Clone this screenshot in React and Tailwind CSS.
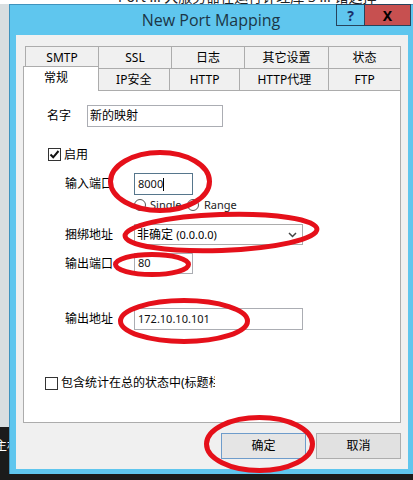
// New Port Mapping dialog (Windows 8 style) with red annotation circles
const FONT = "font-['Noto_Sans','Noto_Sans_CJK_SC',sans-serif]"

const TOP_TABS = [
  { label: 'SMTP', w: 'w-[74px]' },
  { label: 'SSL', w: 'w-[74px]' },
  { label: '日志', w: 'w-[74px]' },
  { label: '其它设置', w: 'w-[85px]' },
  { label: '状态', w: 'w-[73px]' },
]

const BOTTOM_TABS = [
  { label: 'IP安全', w: 'w-[72px]' },
  { label: 'HTTP', w: 'w-[72px]' },
  { label: 'HTTP代理', w: 'w-[90px]' },
  { label: 'FTP', w: 'w-[73px]' },
]

function Checkbox({ checked }) {
  return (
    <span className="w-[13px] h-[13px] border border-[#333] bg-white flex items-center justify-center shrink-0">
      {checked && (
        <svg width="11" height="11" viewBox="0 0 11 11">
          <path d="M1.5 5.5 L4.2 8.3 L9.5 2" fill="none" stroke="#111" strokeWidth="2" />
        </svg>
      )}
    </span>
  )
}

function Radio() {
  return <span className="w-[12px] h-[12px] rounded-full border border-[#555] bg-white shrink-0" />
}

function Field({ label, children, className = '' }) {
  return (
    <div className={`flex items-center pl-[41px] ${className}`}>
      <span className="w-[69px] text-[12px] text-black">{label}</span>
      {children}
    </div>
  )
}

function Annotations() {
  // hand-drawn red ellipses lying over the dialog
  return (
    <svg className="absolute inset-0 pointer-events-none" width="413" height="480" viewBox="0 0 413 480">
      <g fill="none" stroke="#e5101a" strokeWidth="5">
        <ellipse cx="160" cy="181.5" rx="49.5" ry="29" />
        <ellipse cx="221" cy="232.5" rx="96" ry="18" transform="rotate(-2 221 232.5)" />
        <ellipse cx="152" cy="264.5" rx="36.5" ry="10" />
        <ellipse cx="184" cy="321" rx="63.5" ry="20.5" />
        <ellipse cx="259.5" cy="444" rx="53" ry="26.5" />
      </g>
    </svg>
  )
}

export default function App() {
  return (
    <div className={`relative w-[413px] h-[480px] overflow-hidden bg-[#1b1b1b] ${FONT}`}>
      {/* desktop window behind, only its bottom edge shows */}
      <div className="h-[4px] bg-white overflow-hidden">
        <div className="-mt-[11px] pl-[118px] text-[14px] leading-[16px] text-[#222] whitespace-nowrap">
          Port ... 大服务器在运行计理库 3 ... 诸选择
        </div>
      </div>

      <div className="flex h-[470px]">
        {/* strip of desktop to the left */}
        <div className="w-[9px] flex flex-col shrink-0">
          <div className="h-[423px] bg-[#d8dee0]" />
          <div className="flex-1 pt-[10px] overflow-hidden">
            <span className="block -ml-[5px] text-white text-[12px] whitespace-nowrap">主机</span>
          </div>
        </div>

        {/* dialog */}
        <div className="w-[404px] shrink-0 flex flex-col bg-[#5fc6ee] border-l border-t border-[#3f93bd] pl-[6px] pr-[5px] pb-[5px]">
          {/* title bar */}
          <div className="h-[30px] flex items-start">
            <div className="flex-1 pl-[70px] pt-[5px] text-center text-[16px] leading-[20px] text-[#1c3646] font-['Open_Sans',sans-serif]">
              New Port Mapping
            </div>
            <div className="flex -mt-px -mr-[3px]">
              <div className="w-[29px] h-[22px] border border-[#26435c] flex items-center justify-center text-[14px] font-bold text-[#1a2f6b]">?</div>
              <div className="w-[46px] h-[22px] border border-l-0 border-[#26435c] bg-[#c75050] flex items-center justify-center text-[14px] font-bold text-black">X</div>
            </div>
          </div>

          {/* body */}
          <div className="flex-1 bg-[#f0f0f0] flex flex-col px-[7px] pt-[11px]">
            {/* back row of tabs */}
            <div className="flex h-[22px] pl-[2px]">
              {TOP_TABS.map((t, i) => (
                <div key={t.label}
                  className={`${t.w} ${i > 0 ? '-ml-px' : ''} h-[22px] border border-b-0 border-[#acacac] bg-[#f0f0f0] flex items-center justify-center text-[12px] text-black`}>
                  {t.label}
                </div>
              ))}
            </div>

            {/* front row of tabs */}
            <div className="flex items-start h-[22px] relative z-10">
              <div className="w-[76px] h-[25px] -mt-[2px] border border-b-0 border-[#acacac] bg-white flex items-start justify-center pt-[2px] pr-[10px] text-[12px] text-black">
                常规
              </div>
              {BOTTOM_TABS.map(t => (
                <div key={t.label}
                  className={`${t.w} -ml-px h-[22px] border border-b-0 border-[#acacac] bg-[#f0f0f0] flex items-center justify-center text-[12px] text-black`}>
                  {t.label}
                </div>
              ))}
            </div>

            {/* tab page */}
            <div className="h-[333px] border border-[#acacac] bg-white flex flex-col">
              <div className="mt-[14px] pl-[23px] flex items-center">
                <span className="w-[40px] text-[12px] text-black">名字</span>
                <div className="w-[136px] h-[22px] border border-[#abadb3] flex items-center pl-[2px] text-[12px] text-black">新的映射</div>
              </div>

              <div className="mt-[20px] pl-[24px] h-[15px] flex items-center gap-[3px]">
                <Checkbox checked />
                <span className="text-[12px] text-black">启用</span>
              </div>

              <Field label="输入端口" className="mt-[11px]">
                <div className="w-[59px] h-[22px] border border-[#56768c] flex items-center pl-[3px] text-[11px] text-[#111]">
                  8000<span className="w-px h-[13px] bg-black" />
                </div>
              </Field>

              <div className="mt-[4px] pl-[110px] h-[12px] flex items-center text-[11px] text-[#222]">
                <Radio />
                <span className="ml-[4px] w-[37px]">Single</span>
                <Radio />
                <span className="ml-[5px]">Range</span>
              </div>

              <Field label="捆绑地址" className="mt-[13px]">
                <div className="w-[169px] h-[21px] border border-[#acacac] bg-white flex items-center pl-[2px] pr-[5px] text-[12px] text-black">
                  <span className="flex-1">非确定 <span className="text-[11px]">(0.0.0.0)</span></span>
                  <svg width="9" height="6" viewBox="0 0 9 6">
                    <path d="M1 1 L4.5 4.5 L8 1" fill="none" stroke="#444" strokeWidth="1.5" />
                  </svg>
                </div>
              </Field>

              <Field label="输出端口" className="mt-[8px]">
                <div className="w-[59px] h-[21px] border border-[#abadb3] flex items-center pl-[3px] text-[11px] text-[#111]">80</div>
              </Field>

              <Field label="输出地址" className="mt-[34px]">
                <div className="w-[169px] h-[22px] border border-[#abadb3] flex items-center pl-[3px] text-[11px] text-[#111]">172.10.10.101</div>
              </Field>

              <div className="mt-[44px] pl-[21px] flex items-center gap-[3px]">
                <Checkbox />
                <span className="w-[154px] overflow-hidden whitespace-nowrap text-[12px] text-black">包含统计在总的状态中(标题栏)</span>
              </div>
            </div>

            {/* buttons */}
            <div className="mt-[10px] flex justify-end gap-[10px]">
              <button className="w-[85px] h-[26px] border border-[#6e9ccb] bg-[#e5e5e5] text-[12px] text-black">确定</button>
              <button className="w-[85px] h-[26px] border border-[#adadad] bg-[#e1e1e1] text-[12px] text-black">取消</button>
            </div>
          </div>
        </div>
      </div>

      <Annotations />
    </div>
  )
}
